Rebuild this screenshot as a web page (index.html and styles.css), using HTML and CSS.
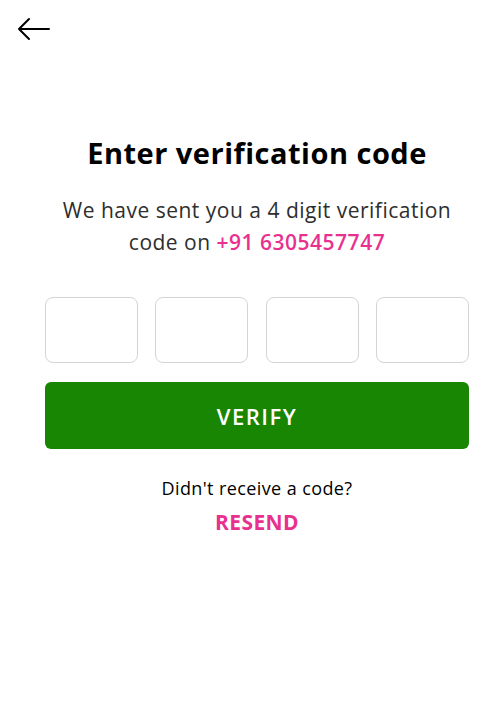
FILE: index.html
```html
<!DOCTYPE html>
<html>
<head>
<meta charset="utf-8">
<link rel="stylesheet" href="styles.css">
</head>
<body>
<div class="page">
  <header class="topbar">
    <svg class="back" width="34" height="24" viewBox="0 0 34 24" fill="none" stroke="#000" stroke-width="2" stroke-linecap="round" stroke-linejoin="round">
      <path d="M2 12 H32 M12 2 L2 12 L12 22"/>
    </svg>
  </header>
  <main class="content">
    <h1 class="title">Enter verification code</h1>
    <p class="subtitle">We have sent you a 4 digit verification<br>code on <span class="phone">+91 6305457747</span></p>
    <div class="otp">
      <input class="digit" type="text" maxlength="1">
      <input class="digit" type="text" maxlength="1">
      <input class="digit" type="text" maxlength="1">
      <input class="digit" type="text" maxlength="1">
    </div>
    <button class="verify">VERIFY</button>
    <p class="noreceive">Didn't receive a code?</p>
    <a class="resend">RESEND</a>
  </main>
</div>
</body>
</html>
```
FILE: styles.css
```css
html, body {
  margin: 0;
  padding: 0;
  background: #fff;
}
body {
  font-family: "Open Sans", "Noto Sans", sans-serif;
  color: #222;
}
.page {
  width: 488px;
  height: 708px;
}
.topbar {
  height: 40px;
  padding: 17px 0 0 17px;
  box-sizing: border-box;
}
.back {
  display: block;
}
.content {
  width: 424px;
  margin-left: 45px;
  display: flex;
  flex-direction: column;
  align-items: center;
  text-align: center;
}
.title {
  margin: 95px 0 0;
  font-size: 29px;
  font-weight: 700;
  line-height: 36px;
  letter-spacing: 0.5px;
  color: #000;
}
.subtitle {
  margin: 23px 0 0;
  font-size: 21px;
  line-height: 32px;
  letter-spacing: 0.5px;
  color: #2e2e2e;
}
.phone {
  color: #e8318f;
  font-weight: 600;
}
.otp {
  margin-top: 39px;
  width: 100%;
  display: flex;
  justify-content: space-between;
}
.digit {
  width: 93px;
  height: 66px;
  box-sizing: border-box;
  border: 1px solid #d4d4d4;
  border-radius: 8px;
  background: #fff;
  padding: 0;
  font-size: 24px;
  text-align: center;
}
.verify {
  margin-top: 19px;
  width: 100%;
  height: 67px;
  border: none;
  border-radius: 6px;
  background: #188503;
  color: #fff;
  font-family: inherit;
  font-size: 22px;
  font-weight: 600;
  letter-spacing: 1.5px;
}
.noreceive {
  margin: 27px 0 0;
  font-size: 18px;
  line-height: 24px;
  letter-spacing: 0.4px;
  color: #000;
}
.resend {
  margin-top: 10px;
  font-size: 21px;
  line-height: 24px;
  font-weight: 700;
  letter-spacing: 0.4px;
  color: #e8318f;
}
```
